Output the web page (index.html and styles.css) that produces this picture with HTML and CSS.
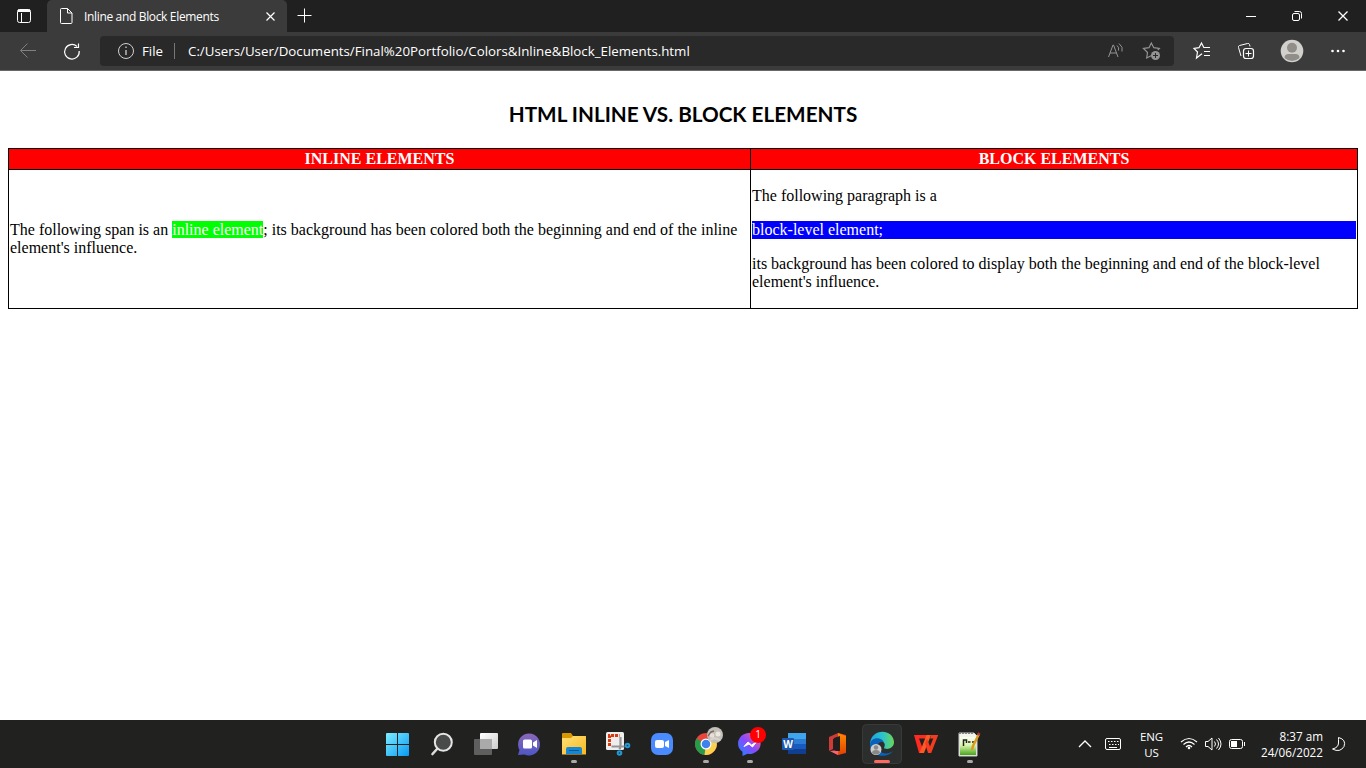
FILE: index.html
```html
<!DOCTYPE html>
<html lang="en">
<head>
<meta charset="utf-8">
<title>Inline and Block Elements</title>
<link rel="stylesheet" href="styles.css">
</head>
<body>
<div class="screen">
  <header class="tabbar">
    <svg class="line" width="45" height="32" viewBox="0 0 45 32"><rect x="17.5" y="9.500" width="13" height="13" rx="2"/><path d="M18 11.500h12M21.500 13v9" /><path d="M18 10.500h12" stroke-width="2"/></svg>
    <div class="tab">
      <svg class="line" width="37" height="32" viewBox="47 0 37 32"><path d="M61.500 8.500h6l4.500 4.500v9.500q0 1-1 1h-9.500q-1 0-1-1v-13q0-1 1-1zM67.500 8.500v4.500h4.500"/></svg>
      <span class="tab-title">Inline and Block Elements</span>
      <svg class="line" width="34" height="32" viewBox="253 0 34 32"><path d="M266.500 12.500l8 8m0-8l-8 8" stroke-width="1.200"/></svg>
    </div>
    <svg class="line" width="36" height="32" viewBox="287 0 36 32"><path d="M297.500 15.500h14M304.500 8.500v14"/></svg>
    <div class="grow"></div>
    <svg class="line" width="138" height="32" viewBox="1228 0 138 32"><path d="M1246 16.500h10"/><path d="M1338.500 11.500l9 9m0-9l-9 9" stroke-width="1.300"/><rect x="1292.500" y="13.500" width="7" height="7" rx="1.500"/><path d="M1294.500 11.500h5q2 0 2 2v5"/></svg>
  </header>
  <div class="toolbar">
    <svg class="line" width="100" height="38" viewBox="0 32 100 38"><path d="M36 50.500H20.500m7-7l-7 7l7 7" stroke="#808080"/><path d="M77 46.500a7.300 7.300 0 1 0 2.200 4.500M78.500 43.500v4h-4.500" stroke-width="1.200"/></svg>
    <div class="address">
      <svg class="line" width="41" height="30" viewBox="100 36 41 30"><circle cx="126" cy="51" r="7.500" stroke="#d0d0d0"/><path d="M126 50v5M126 46.500v1.500" stroke="#d0d0d0" stroke-width="1.300"/></svg>
      <span class="file">File</span><span class="bar"></span><span class="url">C:/Users/User/Documents/Final%20Portfolio/Colors&amp;Inline&amp;Block_Elements.html</span>
      <div class="grow"></div>
      <svg class="line dim" width="74" height="30" viewBox="1100 36 74 30"><path d="M1108.500 57l4.500-12h.5l4.500 12M1110 53h6.500M1117 45.500q2.500 2 1.500 5M1119 43.500q4.500 3.500 3 8"/><path d="M1151.500 55.500l-4.800 2.500 .8-5.500-4-4 5.500-.8 2.300-4.700 2.500 4.700 5.500.8-1.500 1.500" stroke-width="1.200"/><circle cx="1155.500" cy="55.500" r="4.500" fill="#949494" stroke="none"/><path d="M1153 55.500h5M1155.500 53v5" stroke="#292929"/></svg>
    </div>
    <svg class="line" width="192" height="38" viewBox="1174 32 192 38"><path d="M1202 54.500l-.5-.5-5 4 1-6-3.500-3.500 5-.8 2.500-4.700 2.300 4.500h3.500" stroke-width="1.200"/><path d="M1204 47.500h6M1204 51.500h6M1204 55.500h6"/><path d="M1241 56l-2.500-8.500q-.5-1.500 1-2l8-2q1.500-.5 2 1l.5 2"/><rect x="1243.500" y="48.500" width="10" height="10" rx="2.500" stroke-width="1.200"/><path d="M1245.500 53.500h6M1248.500 50.500v6"/><circle cx="1292" cy="51" r="11.300" fill="#d2d0cd" stroke="none"/><circle cx="1292" cy="47.800" r="5" fill="#918e8a" stroke="none"/><path d="M1284.500 58q0-4 4-4h7q4 0 4 4-7.500 6-15 0z" fill="#918e8a" stroke="none"/><g fill="#fff" stroke="none"><circle cx="1332.500" cy="51" r="1.300"/><circle cx="1338" cy="51" r="1.300"/><circle cx="1343.500" cy="51" r="1.300"/></g></svg>
  </div>
  <main class="page">
    <h1 class="heading">HTML INLINE VS. BLOCK ELEMENTS</h1>
    <table class="compare">
      <colgroup><col class="first"><col></colgroup>
      <tr><th>INLINE ELEMENTS</th><th>BLOCK ELEMENTS</th></tr>
      <tr>
        <td>The following span is an <span class="inline-demo">inline element</span>; its background has been colored both the beginning and end of the inline<br>element's influence.</td>
        <td><p>The following paragraph is a</p><p class="block-demo">block-level element;</p><p>its background has been colored to display both the beginning and end of the block-level<br>element's influence.</p></td>
      </tr>
    </table>
  </main>
  <footer class="taskbar">
    <svg width="0" height="0"><defs>
      <linearGradient id="win" x2="1" y2="1"><stop stop-color="#7eeeff"/><stop offset="1" stop-color="#0899f5"/></linearGradient>
      <linearGradient id="tv" x2="1" y2="1"><stop stop-color="#fff"/><stop offset="1" stop-color="#ccc"/></linearGradient>
      <linearGradient id="chat" x2="0" y2="1"><stop stop-color="#8b67b7"/><stop offset="1" stop-color="#4d56c8"/></linearGradient>
      <linearGradient id="folder" x2="1" y2="1"><stop stop-color="#ffe078"/><stop offset="1" stop-color="#f8b71d"/></linearGradient>
      <linearGradient id="mess" x1="0" y1="1" x2="1" y2="0"><stop stop-color="#158cff"/><stop offset=".5" stop-color="#8a48ff"/><stop offset="1" stop-color="#ff6676"/></linearGradient>
      <linearGradient id="edge" x2="1" y2="0"><stop stop-color="#1ca5df"/><stop offset=".5" stop-color="#2bc0cf"/><stop offset="1" stop-color="#69d857"/></linearGradient>
      <linearGradient id="off" x2="0" y2="1"><stop stop-color="#ff8a00"/><stop offset="1" stop-color="#e24100"/></linearGradient>
      <linearGradient id="npp" x2="0" y2="1"><stop stop-color="#fafff0"/><stop offset=".45" stop-color="#ddf5b2"/><stop offset="1" stop-color="#48a51b"/></linearGradient>
    </defs></svg>
    <div class="apps">
      <svg class="app" viewBox="376 720 44 48"><path fill="url(#win)" d="M386 734q0-1 1-1h10v11h-11zM398 733h10q1 0 1 1v10h-11zM386 745h11v11h-10q-1 0-1-1zM398 745h11v10q0 1-1 1h-10z"/></svg>
      <svg class="app" viewBox="420 720 44 48"><path d="M437.500 748.500l-5 5.500" stroke="#ddd" stroke-width="2.600" stroke-linecap="round"/><circle cx="443.300" cy="742.300" r="8.500" fill="#494b4b" stroke="#e5e5e5" stroke-width="2"/></svg>
      <svg class="app" viewBox="464 720 44 48"><rect x="480" y="733" width="18" height="16" rx="1" fill="url(#tv)"/><rect x="474" y="739" width="18" height="16" rx="1" fill="#777" opacity=".72"/><path d="M480 739h12v10h-12z" fill="#aaa"/></svg>
      <svg class="app" viewBox="508 720 44 48"><path d="M518 755l1.500-5a11 11 0 1 1 5 4.500z" fill="url(#chat)"/><rect x="523" y="739.500" width="9" height="9" rx="1.500" fill="#fff"/><path d="M533 742.500l4-2.500v8l-4-2.500z" fill="#fff"/></svg>
      <svg class="app" viewBox="552 720 44 48"><path d="M562 734q0-1 1-1h8l2 3h13v4h-24z" fill="#d99800"/><path d="M562 738h9l2-2h12q1 0 1 1v17.500h-24z" fill="url(#folder)"/><path d="M566 754v-5q0-2 2-2h12q2 0 2 2v5z" fill="#1587d3"/><path d="M569 750.500h10" stroke="#075994"/><rect class="open" x="571" y="760" width="6" height="3" rx="1.500"/></svg>
      <svg class="app" viewBox="596 720 44 48"><rect x="606" y="732" width="18" height="18" rx="1.500" fill="#eee"/><path d="M609.500 746v-10.500h10" fill="none" stroke="#d83b12" stroke-width="3" stroke-dasharray="3 1"/><path d="M620.500 737v9.500l-1 3M611.500 746.500h13" stroke="#969696" stroke-width="2.200" fill="none"/><g fill="#203540" stroke="#2199d5" stroke-width="2"><circle cx="627.500" cy="745.500" r="1.800"/><circle cx="619.500" cy="753" r="1.800"/></g></svg>
      <svg class="app" viewBox="640 720 44 48"><rect x="651" y="733" width="22" height="22" rx="7" fill="#4a8cff"/><rect x="655" y="740" width="9" height="8" rx="2" fill="#fff"/><path d="M665 742l4-2v8l-4-2z" fill="#fff"/></svg>
      <svg class="app" viewBox="684 720 44 48"><circle cx="706" cy="744" r="11" fill="#e9453a"/><path d="M706 744L696.500 738.500A11 11 0 0 0 705 755z" fill="#259b4b"/><path d="M706 744L715.500 739A11 11 0 0 1 704.500 755z" fill="#fcd14b"/><circle cx="706" cy="744" r="5.500" fill="#fff"/><circle cx="706" cy="744" r="4.300" fill="#3e82ee"/><circle cx="715" cy="735" r="8" fill="#c3c0ba"/><path d="M708 736l3-4 3-1" stroke="#796d60" stroke-width="1.500" fill="none"/><path d="M710 740l4-2 6 2" stroke="#d9d3ca" stroke-width="2" fill="none"/><circle cx="712" cy="735.500" r="2.300" fill="#e9dfd8"/><circle cx="718" cy="734" r="2.500" fill="#eee7dd"/><rect class="open" x="703" y="760" width="6" height="3" rx="1.500"/></svg>
      <div class="app-box"><svg class="app" viewBox="728 720 44 48"><path d="M742.500 756v-4.200a11.300 10.500 0 1 1 5 2z" fill="url(#mess)"/><path d="M744 746.500l4-4.500 3.500 3 5-3-4 5-3.500-3z" fill="#fff" stroke="#fff"/><rect class="open" x="747" y="760" width="6" height="3" rx="1.500"/></svg><span class="badge">1</span></div>
      <div class="app-box"><svg class="app" viewBox="772 720 44 48"><path d="M788 733h18v6h-18z" fill="#41a5ee"/><path d="M788 739h18v5h-18z" fill="#2b7cd3"/><path d="M788 744h18v5h-18z" fill="#185abd"/><path d="M788 749h18v5h-18z" fill="#103f91"/><rect x="782" y="738" width="12" height="12" rx="1" fill="#1d58b0"/></svg><span class="word-letter">W</span></div>
      <svg class="app" viewBox="816 720 44 48"><path d="M829 737l9-4 8 2v18l-8 2-8-4 8 1v-15l-5 2v10l-4 2z" fill="#cf3b36"/><path d="M838 733l8 3v16l-8 3z" fill="url(#off)"/><path d="M830 751l8-1v5z" fill="#ff6074"/><path d="M834 738l6-2v15h-4l-2-1z" fill="#211f1e"/></svg>
      <svg class="app" viewBox="860 720 44 48"><rect x="862.500" y="724.500" width="39" height="39" rx="4" fill="#2c2e2e" stroke="#383a3a"/><path d="M870 745c0-17 23-17 24-3 0 7-8 8-10 6 2-4 0-7-4-7-5 0-7 5-5 10z" fill="url(#edge)"/><path d="M870 745c0-8 11-9 14-3-6-1-8 4-5 8 4 5 10 4 14 1-5 8-23 6-23-6z" fill="#0862b8"/><circle cx="876" cy="749.500" r="5.500" fill="#ccc"/><circle cx="876" cy="747.500" r="2.200" fill="#888"/><path d="M872 753q0-3 4-3t4 3q-4 3-8 0z" fill="#888"/><rect x="874" y="760" width="16" height="3" rx="1.500" fill="#ff6961"/></svg>
      <svg class="app" viewBox="904 720 44 48"><path fill-rule="evenodd" d="M914 735h13l-1.500 3.500h-6.500l3 8 1 2-2 4.500h-2z" fill="#ff2b20"/><path d="M926.500 735h4.500l-7 18h-4.500z" fill="#ff5a24"/><path d="M925 743l2-4.500 3 8 3.300-8h-3.300l1.200-3.500h7l-7 18h-3.200z" fill="#f53c20"/></svg>
      <svg class="app" viewBox="948 720 44 48"><path d="M959 733h15l3 3v20h-18z" fill="#f3f5ec" stroke="#ccc"/><path d="M960 737h16v18h-16z" fill="url(#npp)"/><path d="M959 733.500h15" stroke="#858585" stroke-dasharray="2 1"/><path d="M963.500 746v-6h3v3M968 742h2.500M972 742h2.500" fill="none" stroke="#222" stroke-width="1.500"/><path d="M972 750l1-4 6-12" stroke="#dc9c20" stroke-width="2.500" fill="none"/><path d="M978 735l1.500-2" stroke="#b3333d" stroke-width="2.500"/><rect class="open" x="967" y="760" width="6" height="3" rx="1.500"/></svg>
    </div>
    <svg class="line" width="60" height="48" viewBox="1070 720 60 48"><path d="M1079 747l6-6 6 6" stroke-width="1.300"/><rect x="1105.500" y="738.500" width="15" height="11" rx="1.500"/><path d="M1108 741.500h11M1109 744.500h10" stroke-dasharray="1.500 1.500"/><path d="M1109 747.500h8"/></svg>
    <div class="language">ENG<br>US</div>
    <svg class="line" width="75" height="48" viewBox="1173 720 75 48"><path d="M1181 742q8-7 16 0M1183.500 744.500q5.500-5 11 0M1186 747q3-3 6 0" stroke-width="1.200"/><circle cx="1189" cy="748" r="1.300" fill="#fff" stroke="none"/><path d="M1205.500 741.500h2.500l4-3.500v12l-4-3.500h-2.500zM1214.500 741.500q2 2.500 0 5M1216.500 739.500q4 4.500 0 9M1218.500 738q5 6 0 12"/><rect x="1229.500" y="739.500" width="13" height="9" rx="2"/><path d="M1231 741h6v6h-6z" fill="#fff" stroke="none"/><path d="M1244.500 742v4"/></svg>
    <div class="clock">8:37 am<br>24/06/2022</div>
    <svg class="line" width="44" height="48" viewBox="1322 720 44 48"><path d="M1338.500 737.500q8 2 5.500 9-4 6.500-11.500 2.500 6-1.500 6-6t0-5.500z"/></svg>
  </footer>
</div>
</body>
</html>
```
FILE: styles.css
```css
body { margin: 0; }
.screen { width: 1366px; height: 768px; display: flex; flex-direction: column; overflow: hidden; background: #fff; font-family: "Open Sans", "Noto Sans", sans-serif; }
svg { display: block; flex-shrink: 0; }
.line { fill: none; stroke: #fff; stroke-width: 1; }
.dim { stroke: #949494; }
.grow { flex: 1; }
.tabbar { height: 32px; display: flex; background: #202020; color: #fff; }
.tab { display: flex; align-items: center; width: 240px; height: 32px; margin-left: 2px; background: #3b3b3b; border-radius: 5px 5px 0 0; }
.tab-title { width: 169px; font-size: 12px; letter-spacing: -0.34px; white-space: nowrap; }
.toolbar { box-sizing: border-box; height: 39px; display: flex; background: #3b3b3b; border-bottom: 1px solid #686868; color: #fff; }
.address { display: flex; align-items: center; width: 1074px; height: 30px; margin-top: 4px; background: #292929; border-radius: 4px; font-size: 13.3px; white-space: nowrap; }
.file { width: 31px; padding-left: 1px; margin-right: 1px; }
.bar { width: 1px; height: 16px; margin-right: 13px; background: #777; }
.page { box-sizing: border-box; height: 649px; padding: 0 8px; font-family: "Liberation Serif", serif; font-size: 16px; line-height: 18px; }
.heading { margin: 29px 0 19px; font-family: Lato, sans-serif; font-size: 20.7px; line-height: 29px; text-align: center; font-weight: 700; white-space: nowrap; }
.compare { width: 1350px; table-layout: fixed; border-collapse: collapse; }
.first { width: 742px; }
.compare th, .compare td { padding: 1px; border: 1px solid #000; }
.compare th { background: #f00; color: #fff; }
.compare p { margin: 16px 0; }
.inline-demo { background: #0f0; color: #fff; }
.compare .block-demo { background: #00f; color: #fff; }
.taskbar { height: 48px; display: flex; background: #212120; color: #fff; }
.apps { display: flex; width: 694px; padding-left: 376px; }
.app { width: 44px; height: 48px; }
.app-box { position: relative; width: 44px; height: 48px; }
.open { fill: #aaa; }
.badge { position: absolute; left: 22px; top: 7px; width: 16px; height: 16px; border-radius: 50%; background: #f00; font-size: 10px; line-height: 15px; text-align: center; }
.word-letter { position: absolute; left: 10px; top: 18px; width: 12px; font-size: 10px; line-height: 12px; font-weight: 700; text-align: center; }
.language { width: 43px; padding-top: 9px; font-size: 11.5px; line-height: 16px; text-align: center; letter-spacing: -0.1px; }
.clock { width: 75px; padding-top: 8px; margin-right: -1px; font-size: 11.7px; line-height: 16px; text-align: right; white-space: nowrap; }
```
